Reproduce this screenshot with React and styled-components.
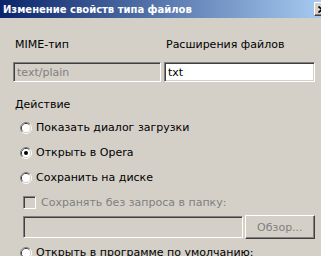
import React from 'react'
import styled, { createGlobalStyle } from 'styled-components'

const GlobalStyle = createGlobalStyle`
  html, body { margin: 0; padding: 0; background: #d4d0c8; overflow: hidden; }
  * { box-sizing: border-box; }
`

const Window = styled.div`
  width: 321px;
  height: 256px;
  overflow: hidden;
  background: #d4d0c8;
  font-family: "DejaVu Sans", Tahoma, sans-serif;
  font-size: 11px;
  color: #000;
`

const TitleBar = styled.div`
  height: 18px;
  display: flex;
  align-items: center;
  background: linear-gradient(to right, #0a246a, #a6caf0);
  padding-left: 3px;
`

const Title = styled.div`
  flex: 1;
  color: #fff;
  font-weight: bold;
  font-size: 10px;
  white-space: nowrap;
`

const CloseButton = styled.div`
  flex-shrink: 0;
  width: 16px;
  height: 14px;
  margin-right: -9px;
  background: #d4d0c8;
  border: 1px solid;
  border-color: #fff #404040 #404040 #fff;
  box-shadow: inset -1px -1px #808080;
  display: flex;
  align-items: center;
  justify-content: center;
`

const Body = styled.div`
  padding: 0 6px 0 13px;
`

const FieldGrid = styled.div`
  display: grid;
  grid-template-columns: 148px 151px;
  column-gap: 3px;
  row-gap: 11px;
  padding-top: 20px;
`

const Label = styled.div`
  padding-left: 2px;
  line-height: 13px;
  white-space: nowrap;
`

const Sunken = styled.div`
  height: ${p => p.$h || 20}px;
  width: ${p => (p.$w ? p.$w + 'px' : 'auto')};
  border: 1px solid;
  border-color: #808080 #fff #fff #808080;
  box-shadow: inset 1px 1px #404040, inset -1px -1px #d4d0c8;
  background: ${p => (p.$disabled ? '#d4d0c8' : '#fff')};
  color: ${p => (p.$disabled ? '#808080' : '#000')};
  padding: 0 3px;
  display: flex;
  align-items: center;
  white-space: nowrap;
`

const Section = styled.div`
  margin-top: 16px;
`

const Options = styled.div`
  display: flex;
  flex-direction: column;
  gap: 12px;
  padding-left: 7px;
  margin-top: 10px;
`

const Option = styled.div`
  display: flex;
  align-items: center;
  gap: 4px;
  height: 13px;
  white-space: nowrap;
  color: ${p => (p.$disabled ? '#808080' : '#000')};
  margin-top: ${p => p.$shift || 0}px;
`

const SubOption = styled(Option)`
  padding-left: 3px;
  gap: 5px;
`

const CheckBox = styled.div`
  width: 13px;
  height: 13px;
  border: 1px solid;
  border-color: #808080 #fff #fff #808080;
  box-shadow: inset 1px 1px #404040, inset -1px -1px #d4d0c8;
  background: #d4d0c8;
`

const PathRow = styled.div`
  display: flex;
  align-items: center;
  gap: 2px;
  padding-left: 3px;
  margin-top: -6px;
`

const Button = styled.div`
  width: 71px;
  height: 24px;
  border: 1px solid;
  border-color: #fff #404040 #404040 #fff;
  box-shadow: inset -1px -1px #808080;
  color: #808080;
  display: flex;
  align-items: center;
  justify-content: center;
`

const Radio = ({ checked }) => (
  <svg width="12" height="12" viewBox="0 0 12 12">
    <path d="M2.11 9.89A5.5 5.5 0 0 1 9.89 2.11" stroke="#808080" fill="none" />
    <path d="M9.89 2.11A5.5 5.5 0 0 1 2.11 9.89" stroke="#fff" fill="none" />
    <path d="M2.82 9.18A4.5 4.5 0 0 1 9.18 2.82" stroke="#404040" fill="none" />
    <path d="M9.18 2.82A4.5 4.5 0 0 1 2.82 9.18" stroke="#d4d0c8" fill="none" />
    <circle cx="6" cy="6" r="4" fill="#fff" />
    {checked && <circle cx="6" cy="6" r="2" fill="#000" />}
  </svg>
)

export default function App() {
  return (
    <>
      <GlobalStyle />
      <Window>
        <TitleBar>
          <Title>Изменение свойств типа файлов</Title>
          <CloseButton>
            <svg width="8" height="7" viewBox="0 0 8 7">
              <path d="M0.5 0.5L7.5 6.5M7.5 0.5L0.5 6.5" stroke="#000" strokeWidth="1.6" />
            </svg>
          </CloseButton>
        </TitleBar>
        <Body>
          <FieldGrid>
            <Label>MIME-тип</Label>
            <Label>Расширения файлов</Label>
            <Sunken $disabled>text/plain</Sunken>
            <Sunken>txt</Sunken>
          </FieldGrid>
          <Section>
            <Label>Действие</Label>
            <Options>
              <Option><Radio />Показать диалог загрузки</Option>
              <Option><Radio checked />Открыть в Opera</Option>
              <Option><Radio />Сохранить на диске</Option>
              <SubOption $disabled><CheckBox />Сохранять без запроса в папку:</SubOption>
              <PathRow>
                <Sunken $disabled $h={22} $w={222} />
                <Button>Обзор...</Button>
              </PathRow>
              <Option $shift={-5}><Radio />Открыть в программе по умолчанию:</Option>
            </Options>
          </Section>
        </Body>
      </Window>
    </>
  )
}
